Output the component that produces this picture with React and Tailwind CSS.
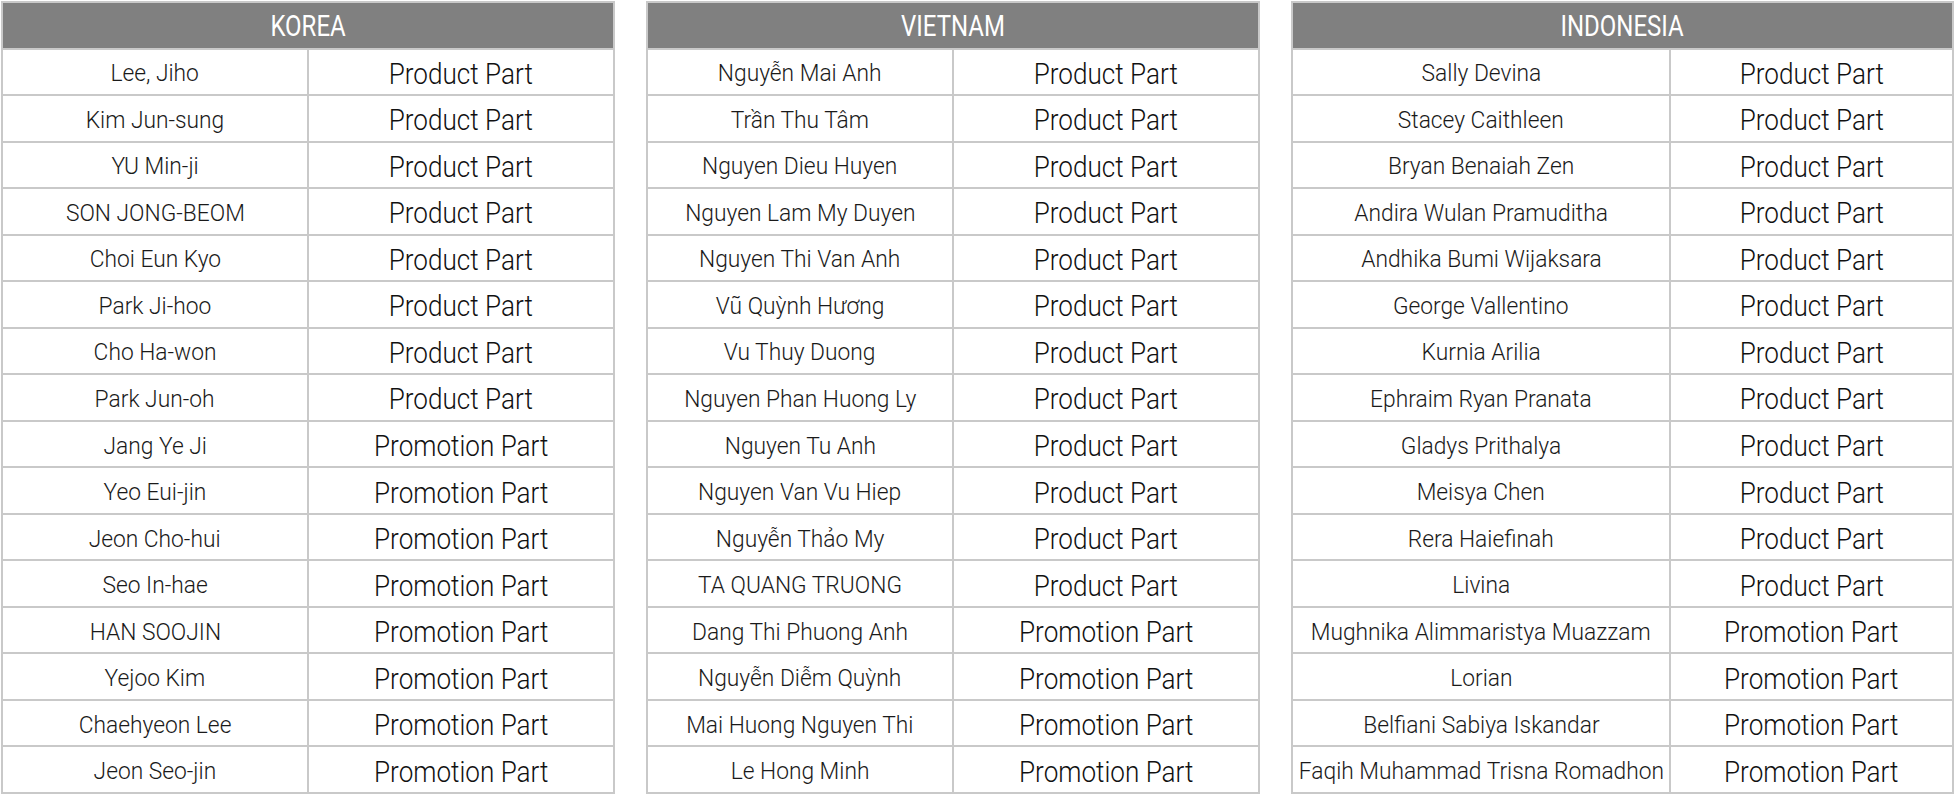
import React from "react";

const P = "Product Part";
const M = "Promotion Part";

const korea = [
  ["Lee, Jiho", P],
  ["Kim Jun-sung", P],
  ["YU Min-ji", P],
  ["SON JONG-BEOM", P],
  ["Choi Eun Kyo", P],
  ["Park Ji-hoo", P],
  ["Cho Ha-won", P],
  ["Park Jun-oh", P],
  ["Jang Ye Ji", M],
  ["Yeo Eui-jin", M],
  ["Jeon Cho-hui", M],
  ["Seo In-hae", M],
  ["HAN SOOJIN", M],
  ["Yejoo Kim", M],
  ["Chaehyeon Lee", M],
  ["Jeon Seo-jin", M],
];

const vietnam = [
  ["Nguyễn Mai Anh", P],
  ["Trần Thu Tâm", P],
  ["Nguyen Dieu Huyen", P],
  ["Nguyen Lam My Duyen", P],
  ["Nguyen Thi Van Anh", P],
  ["Vũ Quỳnh Hương", P],
  ["Vu Thuy Duong", P],
  ["Nguyen Phan Huong Ly", P],
  ["Nguyen Tu Anh", P],
  ["Nguyen Van Vu Hiep", P],
  ["Nguyễn Thảo My", P],
  ["TA QUANG TRUONG", P],
  ["Dang Thi Phuong Anh", M],
  ["Nguyễn Diễm Quỳnh", M],
  ["Mai Huong Nguyen Thi", M],
  ["Le Hong Minh", M],
];

const indonesia = [
  ["Sally Devina", P],
  ["Stacey Caithleen", P],
  ["Bryan Benaiah Zen", P],
  ["Andira Wulan Pramuditha", P],
  ["Andhika Bumi Wijaksara", P],
  ["George Vallentino", P],
  ["Kurnia Arilia", P],
  ["Ephraim Ryan Pranata", P],
  ["Gladys Prithalya", P],
  ["Meisya Chen", P],
  ["Rera Haiefinah", P],
  ["Livina", P],
  ["Mughnika Alimmaristya Muazzam", M],
  ["Lorian", M],
  ["Belfiani Sabiya Iskandar", M],
  ["Faqih Muhammad Trisna Romadhon", M],
];

function Table({ title, rows, widthClass, colsClass }) {
  return (
    <div
      className={`${widthClass} h-[793px] shrink-0 grid ${colsClass} grid-rows-[repeat(17,minmax(0,1fr))] gap-[2px] p-[2px] bg-[#c9c9c9]`}
    >
      <div className="col-span-2 bg-[#808080] text-white flex items-center justify-center">
        <span className="inline-block text-[30px] leading-none scale-x-[0.8] mt-[2px]">{title}</span>
      </div>
      {rows.map(([name, part], i) => (
        <React.Fragment key={i}>
          <div className="bg-white flex items-center justify-center text-[#1a1a1a] whitespace-nowrap">
            <span className="inline-block text-[23px] font-light leading-none scale-x-[0.99] mt-[4px]">{name}</span>
          </div>
          <div className="bg-white flex items-center justify-center text-[#111] whitespace-nowrap">
            <span className="inline-block text-[30px] font-light leading-none scale-x-[0.87] mt-[4px]">{part}</span>
          </div>
        </React.Fragment>
      ))}
    </div>
  );
}

export default function App() {
  return (
    <div
      className="w-[1955px] h-[806px] bg-white flex items-start gap-[31px] pl-px pt-px"
      style={{ fontFamily: 'Roboto, "Liberation Sans", sans-serif' }}
    >
      <Table title="KOREA" rows={korea} widthClass="w-[614px]" colsClass="grid-cols-2" />
      <Table title="VIETNAM" rows={vietnam} widthClass="w-[614px]" colsClass="grid-cols-2" />
      <Table title="INDONESIA" rows={indonesia} widthClass="w-[663px]" colsClass="grid-cols-[376px_1fr]" />
    </div>
  );
}
